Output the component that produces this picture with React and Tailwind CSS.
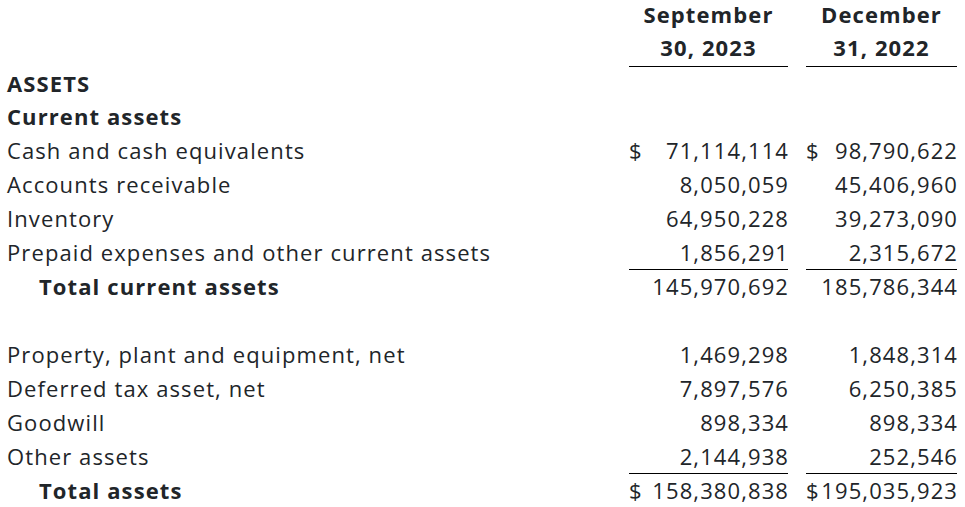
import React from "react";

const rows = [
  { type: "head1", label: "ASSETS", h: "h-[33px]" },
  { type: "head1", label: "Current assets", h: "h-[34px]" },
  { label: "Cash and cash equivalents", a: "71,114,114", b: "98,790,622", dollarA: true, dollarB: true },
  { label: "Accounts receivable", a: "8,050,059", b: "45,406,960" },
  { label: "Inventory", a: "64,950,228", b: "39,273,090" },
  { label: "Prepaid expenses and other current assets", a: "1,856,291", b: "2,315,672", underline: true },
  { label: "Total current assets", a: "145,970,692", b: "185,786,344", total: true },
  { type: "blank" },
  { label: "Property, plant and equipment, net", a: "1,469,298", b: "1,848,314" },
  { label: "Deferred tax asset, net", a: "7,897,576", b: "6,250,385" },
  { label: "Goodwill", a: "898,334", b: "898,334" },
  { label: "Other assets", a: "2,144,938", b: "252,546", underline: true },
  { label: "Total assets", a: "158,380,838", b: "195,035,923", total: true, dollarA: true, dollarB: true },
];

function Cell({ value, dollar, underline, width, extra }) {
  return (
    <div
      className={`${width} ${extra || ""} h-[34px] box-border flex justify-between whitespace-nowrap ${underline ? "border-b border-black" : ""}`}
    >
      <span>{dollar ? "$" : ""}</span>
      <span className="mr-[-1px]">{value}</span>
    </div>
  );
}

export default function App() {
  return (
    <div
      className="w-[965px] h-[507px] bg-white overflow-hidden text-[#212529] text-[22px] leading-[32px] tracking-[1.1px]"
      style={{ fontFamily: '"Open Sans", "Noto Sans", sans-serif' }}
    >
      <div className="mt-[-2px] pl-[7px]">
        <div className="flex font-bold leading-[33px]">
          <div className="w-[622px]" />
          <div className="w-[159px] h-[69px] box-border border-b border-black text-center">
            September<br />30, 2023
          </div>
          <div className="w-[151px] ml-[18px] h-[69px] box-border border-b border-black text-center">
            December<br />31, 2022
          </div>
        </div>
        {rows.map((r, i) => {
          if (r.type === "blank") return <div key={i} className="h-[34px]" />;
          if (r.type === "head1")
            return (
              <div key={i} className={`${r.h} font-bold`}>
                {r.label}
              </div>
            );
          return (
            <div key={i} className="flex h-[34px]">
              <div className={`w-[622px] ${r.total ? "font-bold pl-[32px]" : ""}`}>{r.label}</div>
              <Cell value={r.a} dollar={r.dollarA} underline={r.underline} width="w-[159px]" />
              <Cell value={r.b} dollar={r.dollarB} underline={r.underline} width="w-[151px]" extra="ml-[18px]" />
            </div>
          );
        })}
      </div>
    </div>
  );
}
